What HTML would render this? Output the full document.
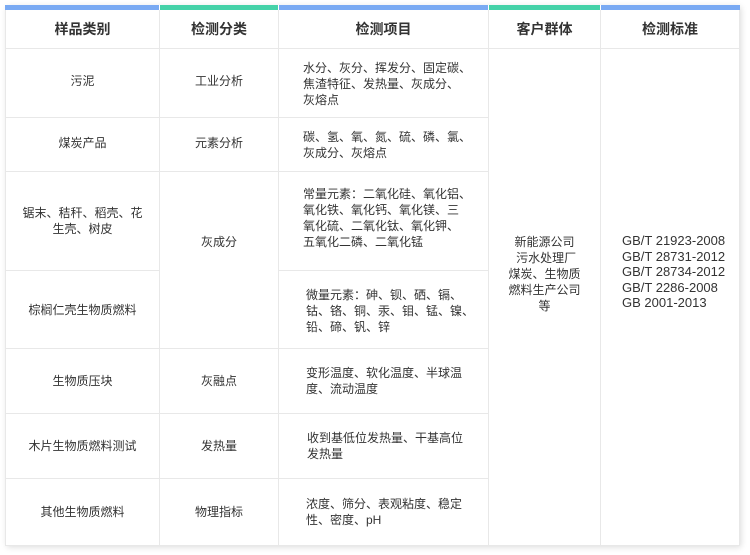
<!DOCTYPE html>
<html><head><meta charset="utf-8"><style>
body{margin:0;width:750px;height:555px;background:#fff;font-family:"Liberation Sans","Noto Sans CJK SC",sans-serif;color:#333;position:relative;overflow:hidden}
.box{position:absolute;left:5px;top:5px;width:734px;height:540px;box-shadow:2px 2px 6px rgba(0,0,0,0.15);background:#fff}
.bar{position:absolute;top:5px;height:5px}
.c{position:absolute;display:flex;align-items:center;box-sizing:border-box;font-size:12px;line-height:16px;border-right:1px solid #e8e8e8;border-bottom:1px solid #e8e8e8}
.ctr{justify-content:center;text-align:center}
.lft{padding-left:24px}
.h{font-size:14px;font-weight:bold;color:#333}
</style></head><body>
<div class="box"></div>
<div class="bar" style="left:5px;width:154px;background:#7aaaf3"></div>
<div class="bar" style="left:160px;width:118px;background:#45d2a8"></div>
<div class="bar" style="left:279px;width:209px;background:#7aaaf3"></div>
<div class="bar" style="left:489px;width:111px;background:#45d2a8"></div>
<div class="bar" style="left:601px;width:139px;background:#7aaaf3"></div>

<div class="c ctr h" style="left:5px;top:10px;width:155px;height:39px;border-left:1px solid #e8e8e8">样品类别</div>
<div class="c ctr h" style="left:160px;top:10px;width:119px;height:39px">检测分类</div>
<div class="c ctr h" style="left:279px;top:10px;width:210px;height:39px">检测项目</div>
<div class="c ctr h" style="left:489px;top:10px;width:112px;height:39px">客户群体</div>
<div class="c ctr h" style="left:601px;top:10px;width:139px;height:39px">检测标准</div>

<!-- col1 -->
<div class="c ctr" style="left:5px;top:49px;width:155px;height:69px;border-left:1px solid #e8e8e8;padding-bottom:4px">污泥</div>
<div class="c ctr" style="left:5px;top:118px;width:155px;height:54px;border-left:1px solid #e8e8e8;padding-bottom:4px">煤炭产品</div>
<div class="c ctr" style="left:5px;top:172px;width:155px;height:99px;border-left:1px solid #e8e8e8">锯末、秸秆、稻壳、花<br>生壳、树皮</div>
<div class="c ctr" style="left:5px;top:271px;width:155px;height:78px;border-left:1px solid #e8e8e8">棕榈仁壳生物质燃料</div>
<div class="c ctr" style="left:5px;top:349px;width:155px;height:65px;border-left:1px solid #e8e8e8">生物质压块</div>
<div class="c ctr" style="left:5px;top:414px;width:155px;height:65px;border-left:1px solid #e8e8e8">木片生物质燃料测试</div>
<div class="c ctr" style="left:5px;top:479px;width:155px;height:67px;border-left:1px solid #e8e8e8">其他生物质燃料</div>

<!-- col2 -->
<div class="c ctr" style="left:160px;top:49px;width:119px;height:69px;padding-bottom:4px">工业分析</div>
<div class="c ctr" style="left:160px;top:118px;width:119px;height:54px;padding-bottom:4px">元素分析</div>
<div class="c ctr" style="left:160px;top:172px;width:119px;height:177px;padding-bottom:36px">灰成分</div>
<div class="c ctr" style="left:160px;top:349px;width:119px;height:65px">灰融点</div>
<div class="c ctr" style="left:160px;top:414px;width:119px;height:65px">发热量</div>
<div class="c ctr" style="left:160px;top:479px;width:119px;height:67px">物理指标</div>

<!-- col3 -->
<div class="c lft" style="left:279px;top:49px;width:210px;height:69px;padding-top:2px">水分、灰分、挥发分、固定碳、<br>焦渣特征、发热量、灰成分、<br>灰熔点</div>
<div class="c lft" style="left:279px;top:118px;width:210px;height:54px">碳、氢、氧、氮、硫、磷、氯、<br>灰成分、灰熔点</div>
<div class="c lft" style="left:279px;top:172px;width:210px;height:99px;padding-bottom:6px">常量元素：二氧化硅、氧化铝、<br>氧化铁、氧化钙、氧化镁、三<br>氧化硫、二氧化钛、氧化钾、<br>五氧化二磷、二氧化锰</div>
<div class="c lft" style="left:279px;top:271px;width:210px;height:78px;padding-left:27px;padding-top:2px">微量元素：砷、钡、硒、镉、<br>钴、铬、铜、汞、钼、锰、镍、<br>铅、碲、钒、锌</div>
<div class="c lft" style="left:279px;top:349px;width:210px;height:65px;padding-left:27px">变形温度、软化温度、半球温<br>度、流动温度</div>
<div class="c lft" style="left:279px;top:414px;width:210px;height:65px;padding-left:28px">收到基低位发热量、干基高位<br>发热量</div>
<div class="c lft" style="left:279px;top:479px;width:210px;height:67px;padding-left:27px">浓度、筛分、表观粘度、稳定<br>性、密度、pH</div>

<!-- col4 -->
<div class="c ctr" style="left:489px;top:49px;width:112px;height:497px;padding-bottom:46px">新能源公司<br>&nbsp;污水处理厂<br>煤炭、生物质<br>燃料生产公司<br>等</div>
<!-- col5 -->
<div class="c" style="left:601px;top:49px;width:139px;height:497px;padding-left:21px;padding-bottom:50px;line-height:15.5px;font-size:13px">GB/T 21923-2008<br>GB/T 28731-2012<br>GB/T 28734-2012<br>GB/T 2286-2008<br>GB 2001-2013</div>
</body></html>
